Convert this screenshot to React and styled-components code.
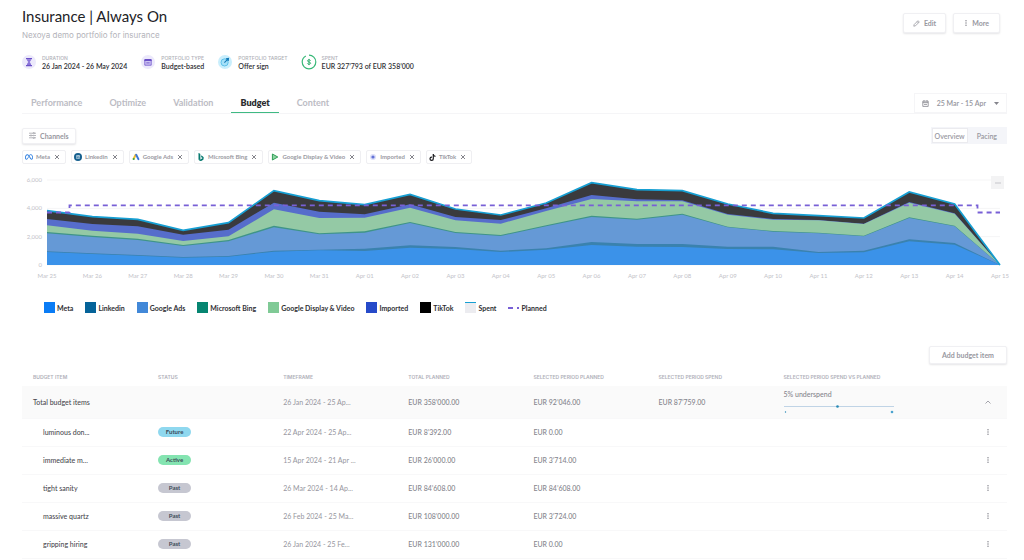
import { useState } from "react";
import styled, { createGlobalStyle, css } from "styled-components";
import { BsBing } from "react-icons/bs";
import { FaMeta, FaLinkedin, FaTiktok } from "react-icons/fa6";

const GlobalStyle = createGlobalStyle`
  *, *::before, *::after {
    box-sizing: border-box;
  }
  body {
    margin: 0;
    background-color: #fff;
    color: #2a2a2e;
    font-family: Lato, "Liberation Sans", sans-serif;
    font-size: 7px;
    line-height: 8px;
  }
  button {
    font-family: inherit;
    cursor: pointer;
  }
`;

const FACTS = [
  { label: "Duration", value: "26 Jan 2024 - 26 May 2024", icon: "duration" },
  { label: "Portfolio type", value: "Budget-based", icon: "type" },
  { label: "Portfolio target", value: "Offer sign", icon: "target" },
  { label: "Spent", value: "EUR 327’793 of EUR 358’000", icon: "spent" },
];

const TABS = ["Performance", "Optimize", "Validation", "Budget", "Content"];

const CHANNELS = [
  { name: "Meta", color: "#0a7cf5", area: "#3b92e9" },
  { name: "Linkedin", color: "#056399", area: "#3a82ae" },
  { name: "Google Ads", color: "#4288d8", area: "#6599d6" },
  { name: "Microsoft Bing", color: "#068571", area: "#3f9488" },
  { name: "Google Display & Video", color: "#80ca96", area: "#94c9a5" },
  { name: "Imported", color: "#264ac9", area: "#566dcb" },
  { name: "TikTok", color: "#000000", area: "#3a3a3d" },
];

// cumulative spend per day, one level per channel (85 = EUR 2,000)
const DAYS = [
  ["Mar 25", [39, 41, 95, 99, 119, 138, 163]],
  ["Mar 26", [33, 35, 84, 88, 103, 123, 145]],
  ["Mar 27", [28, 30, 75, 79, 94, 116, 137]],
  ["Mar 28", [22, 24, 57, 60, 72, 91, 104]],
  ["Mar 29", [25, 27, 71, 75, 86, 106, 127]],
  ["Mar 30", [40, 43, 113, 118, 167, 187, 223]],
  ["Mar 31", [44, 46, 92, 95, 141, 160, 193]],
  ["Apr 01", [42, 49, 97, 101, 142, 152, 181]],
  ["Apr 02", [52, 59, 126, 129, 172, 182, 212]],
  ["Apr 03", [48, 54, 96, 99, 134, 144, 168]],
  ["Apr 04", [39, 43, 87, 90, 124, 135, 150]],
  ["Apr 05", [46, 50, 116, 119, 162, 170, 186]],
  ["Apr 06", [60, 69, 144, 148, 198, 210, 247]],
  ["Apr 07", [55, 63, 136, 139, 191, 197, 226]],
  ["Apr 08", [54, 63, 151, 154, 191, 194, 223]],
  ["Apr 09", [48, 55, 113, 115, 151, 153, 183]],
  ["Apr 10", [47, 55, 100, 102, 136, 138, 155]],
  ["Apr 11", [36, 39, 95, 97, 134, 135, 148]],
  ["Apr 12", [38, 43, 86, 88, 123, 124, 141]],
  ["Apr 13", [71, 77, 141, 143, 187, 189, 219]],
  ["Apr 14", [61, 66, 116, 118, 154, 155, 183]],
  ["Apr 15", [0, 0, 0, 0, 0, 0, 0]],
];

const COLUMNS = [
  "Budget item",
  "Status",
  "Timeframe",
  "Total planned",
  "Selected period planned",
  "Selected period spend",
  "Selected period spend vs planned",
];

const ITEMS = [
  { name: "luminous don...", status: "Future", time: "22 Apr 2024 - 25 Ap...", total: "8’392.00", period: "0.00" },
  { name: "immediate m...", status: "Active", time: "15 Apr 2024 - 21 Apr ...", total: "26’000.00", period: "3’714.00" },
  { name: "tight sanity", status: "Past", time: "26 Mar 2024 - 14 Ap...", total: "84’608.00", period: "84’608.00" },
  { name: "massive quartz", status: "Past", time: "26 Feb 2024 - 25 Ma...", total: "108’000.00", period: "3’724.00" },
  { name: "gripping hiring", status: "Past", time: "26 Jan 2024 - 25 Fe...", total: "131’000.00", period: "0.00" },
];

const STATUS_COLORS = {
  Future: "#8fd8ef",
  Active: "#84e4b1",
  Past: "#c6c7d1",
};

const Page = styled.main`
  padding: 6px 17px 0 22px;
`;

const Header = styled.header`
  display: flex;
  justify-content: space-between;
  align-items: flex-start;
`;

const Title = styled.h1`
  margin: 0;
  font-size: 15px;
  line-height: 20px;
  font-weight: 400;
  color: #222226;
`;

const Subtitle = styled.p`
  margin: 3px 0 0;
  font-family: Inter, sans-serif;
  font-size: 8px;
  line-height: 12px;
  color: #b3b3ba;
`;

const HeaderActions = styled.div`
  display: flex;
  gap: 7px;
  padding: 7px 7px 0 0;
`;

const Button = styled.button`
  display: inline-flex;
  align-items: center;
  justify-content: center;
  gap: 4px;
  height: ${(props) => props.$height || 20}px;
  padding: 0 ${(props) => props.$pad || 10}px;
  border: 1px solid #f0f0f3;
  border-radius: 2px;
  background-color: #fff;
  box-shadow: 0 1px 2px rgba(40, 40, 60, 0.12);
  color: #98989f;
  font-size: 7px;
  line-height: 10px;
  font-weight: 700;
`;

const Facts = styled.dl`
  display: flex;
  gap: 14px;
  margin: 13px 0 0;
`;

const Fact = styled.div`
  display: grid;
  grid-template-columns: 14px auto;
  column-gap: 6px;
  align-items: center;

  svg {
    grid-row: 1 / 3;
  }
  dt {
    font-family: Inter, sans-serif;
    font-size: 5px;
    font-weight: 500;
    color: #b0b0b8;
    text-transform: uppercase;
  }
  dd {
    margin: 0;
    font-weight: 600;
    color: #2f2f34;
  }
`;

const TabBar = styled.div`
  display: flex;
  justify-content: space-between;
  margin-top: 23px;
  border-bottom: 1px solid #f5f5f7;
`;

const Tabs = styled.nav`
  display: flex;
  gap: 9px;
`;

const Tab = styled.button`
  height: 20px;
  padding: 0 9px;
  border: 0;
  border-bottom: 1px solid transparent;
  background: none;
  color: #bcbcc4;
  font-size: 9px;
  line-height: 12px;
  font-weight: 700;

  ${(props) =>
    props.$active &&
    css`
      color: #2b2b30;
      font-weight: 800;
      border-bottom-color: #3fba83;
    `}
`;

const DateButton = styled.button`
  display: flex;
  align-items: center;
  gap: 8px;
  height: 20px;
  padding: 0 7px;
  border: 1px solid #f5f5f7;
  background-color: #fff;
  color: #95959d;
  font-size: 7px;
  line-height: 10px;
  font-weight: 600;
`;

const Toolbar = styled.div`
  display: flex;
  justify-content: space-between;
  align-items: center;
  margin-top: 13px;
`;

const Segmented = styled.div`
  display: flex;
  padding: 1px;
  background-color: #f4f5f9;
`;

const Segment = styled.button`
  height: 15px;
  padding: 0 ${(props) => (props.$active ? 2 : 8)}px;
  border: 1px solid ${(props) => (props.$active ? "#ebebef" : "transparent")};
  background-color: ${(props) => (props.$active ? "#fff" : "transparent")};
  color: #98989f;
  font-size: 7px;
  line-height: 10px;
  font-weight: 600;
`;

const Chips = styled.ul`
  display: flex;
  flex-wrap: wrap;
  gap: 5px;
  margin: 6px 0 0;
  padding: 0;
  list-style: none;
`;

const Chip = styled.li`
  display: flex;
  align-items: center;
  gap: 3px;
  height: 14px;
  padding: 0 4px 0 2px;
  border: 1px solid #efeff2;
  border-radius: 2px;
  color: #9a9aa2;
  font-size: 6px;
  font-weight: 700;
`;

const IconButton = styled.button`
  display: inline-flex;
  align-items: center;
  justify-content: center;
  width: ${(props) => props.$size || 8}px;
  height: ${(props) => props.$size || 8}px;
  padding: 0;
  border: 0;
  background-color: ${(props) => props.$bg || "transparent"};
  color: #77777f;
`;

const ChartWrap = styled.section`
  position: relative;
  margin-top: 4px;

  svg {
    display: block;
  }
  text {
    fill: #c2c2c8;
    font-size: 6px;
  }
`;

const Plot = styled.svg`
  width: 100%;
  overflow: visible;
`;

const ChartMenu = styled.div`
  position: absolute;
  top: 8px;
  right: 3px;
`;

const Legend = styled.ul`
  display: flex;
  flex-wrap: wrap;
  gap: 12px;
  margin: 18px 0 0;
  padding: 0 0 0 22px;
  list-style: none;
`;

const LegendItem = styled.li`
  display: flex;
  align-items: center;
  gap: 2px;
  height: 11px;
  font-weight: 700;
  color: #2f2f34;
`;

const Swatch = styled.span`
  width: 11px;
  height: 11px;
  background-color: ${(props) => props.$color};
  border-top: ${(props) => (props.$line ? `1px solid ${props.$line}` : "0")};
`;

const TableActions = styled.div`
  display: flex;
  justify-content: flex-end;
  margin-top: 33px;
`;

const Table = styled.table`
  width: 100%;
  table-layout: fixed;
  border-collapse: collapse;
  color: #85858d;

  th,
  td {
    padding: 0 0 0 11px;
    text-align: left;
    white-space: nowrap;
    font-weight: 500;
  }
  thead th {
    width: 12.7%;
    height: 22px;
    padding-top: 4px;
    font-family: Inter, sans-serif;
    font-size: 5px;
    font-weight: 600;
    color: #b0b0b9;
    text-transform: uppercase;
  }
  thead th:last-child {
    width: auto;
  }
`;

const Row = styled.tr`
  height: ${(props) => (props.$total ? 32 : 28)}px;
  background-color: ${(props) => (props.$total ? "#fafafa" : "transparent")};
  border-bottom: 1px solid #f8f8f9;

  && th {
    padding-left: ${(props) => (props.$total ? 11 : 21)}px;
    color: #4a4a50;
  }
  td:nth-child(3) {
    color: #96969e;
    font-weight: 400;
  }
  && td:last-child {
    text-align: right;
    padding-right: 15px;
  }
`;

const Status = styled.span`
  display: inline-block;
  width: 33px;
  height: 10px;
  border-radius: 5px;
  background-color: ${(props) => STATUS_COLORS[props.$status]};
  color: #3c4a58;
  font-size: 6px;
  line-height: 10px;
  font-weight: 700;
  text-align: center;
  vertical-align: middle;
`;

const Underspend = styled.div`
  display: flex;
  flex-direction: column;
  gap: 7px;
  width: 110px;

  svg {
    display: block;
  }
`;

const FactIcon = ({ type }) => {
  if (type === "duration") {
    return (
      <svg width="14" height="14" viewBox="0 0 14 14">
        <circle cx="7" cy="7" r="7" fill="#ece9fb" />
        <path d="M4 3h6v1.2H4zM4 10h6v1.2H4z" fill="#6a50c7" />
        <path d="M4.9 4.2h4.2c0 1.5-1 2.1-1.5 2.8.5.7 1.5 1.5 1.5 3H4.9c0-1.5 1-2.3 1.5-3-.5-.7-1.5-1.3-1.5-2.8z" fill="#8a73d8" />
      </svg>
    );
  }
  if (type === "type") {
    return (
      <svg width="14" height="14" viewBox="0 0 14 14">
        <circle cx="7" cy="7" r="7" fill="#ece9fb" />
        <path d="M3.6 4h6.8l.6 2H3z" fill="#6a50c7" />
        <path d="M3.8 6v4.2h6.4V6" fill="#cfc5f3" stroke="#7a62d0" strokeWidth="0.9" />
        <path d="M5.3 7.9h3.4" stroke="#6a50c7" strokeWidth="0.9" />
      </svg>
    );
  }
  if (type === "target") {
    return (
      <svg width="14" height="14" viewBox="0 0 14 14">
        <circle cx="7" cy="7" r="7" fill="#c9eefc" />
        <circle cx="6.6" cy="7.4" r="3.6" fill="#a5e0f8" stroke="#55bce8" strokeWidth="0.9" />
        <path d="M6.4 7.6l3.4-3.4M8 3.8l2.5-.4-.3 2.6" fill="none" stroke="#1479b8" strokeWidth="1.1" />
      </svg>
    );
  }
  return (
    <svg width="14" height="14" viewBox="0 0 14 14" overflow="visible">
      <circle cx="7" cy="7" r="6.8" fill="none" stroke="#38b878" strokeWidth="1.2" strokeDasharray="39.2 3.5" transform="rotate(-90 7 7)" />
      <path d="M8.6 5.6c-.3-.6-.9-.8-1.6-.8-.9 0-1.5.4-1.5 1 0 1.6 3.1.8 3.1 2.4 0 .7-.7 1.1-1.6 1.1-.8 0-1.4-.3-1.7-.9M7 3.9v6.2" fill="none" stroke="#2fae6e" strokeWidth="1" />
    </svg>
  );
};

const ChannelIcon = ({ name }) => {
  switch (name) {
    case "Meta":
      return <FaMeta size={8} color="#2b7de0" />;
    case "Linkedin":
      return (
        <svg width="8" height="8" viewBox="0 0 8 8">
          <circle cx="4" cy="4" r="4" fill="#16608f" />
          <FaLinkedin x="2" y="2" size={4} color="#dbe9f2" />
        </svg>
      );
    case "Google Ads":
      return (
        <svg width="8" height="8" viewBox="0 0 8 8">
          <path d="M3.7 1.8L1.6 5.9" stroke="#f2bd2c" strokeWidth="2" strokeLinecap="round" />
          <path d="M4.2 1.8l2.2 4.3" stroke="#3c78d8" strokeWidth="2" strokeLinecap="round" />
          <circle cx="1.7" cy="6.1" r="1" fill="#34a853" />
        </svg>
      );
    case "Microsoft Bing":
      return <BsBing size={8} color="#087a70" />;
    case "Google Display & Video":
      return (
        <svg width="8" height="8" viewBox="0 0 8 8">
          <path d="M1.4 1l5.4 3-5.4 3z" fill="#8fd3a2" stroke="#2f9f58" strokeWidth="1" strokeLinejoin="round" />
        </svg>
      );
    case "Imported":
      return (
        <svg width="8" height="8" viewBox="0 0 8 8">
          <circle cx="4" cy="4" r="3" fill="#dcdff8" />
          <circle cx="4" cy="4" r="1.6" fill="#6473d6" />
        </svg>
      );
    default:
      return <FaTiktok size={7} color="#1c1c20" />;
  }
};

const DotsIcon = () => (
  <svg width="4" height="8" viewBox="0 0 4 8" fill="#7d7d85">
    <circle cx="2" cy="1.7" r="0.7" />
    <circle cx="2" cy="4" r="0.7" />
    <circle cx="2" cy="6.3" r="0.7" />
  </svg>
);

const CloseIcon = () => (
  <svg width="6" height="6" viewBox="0 0 6 6" stroke="#77777f" strokeWidth="0.9">
    <path d="M1 1l4 4M5 1L1 5" />
  </svg>
);

const LEFT = 25;
const BASE = 97;
const STEP = 953 / 21;

const pointAt = (day, level) => `${LEFT + day * STEP},${BASE - level / 3}`;

const SpendChart = () => {
  const lineFor = (channel) => DAYS.map(([, levels], day) => pointAt(day, levels[channel]));

  return (
    <Plot viewBox="0 0 985 116" role="img" aria-label="Spend per channel">
      {[0, 2, 4, 6].map((tick) => {
        const y = BASE - (tick * 85) / 6;
        return (
          <g key={tick}>
            <line x1={LEFT} x2="978" y1={y} y2={y} stroke="#f5f5f6" />
            <text x="20" y={y + 2} textAnchor="end">
              {tick ? `${tick},000` : "0"}
            </text>
          </g>
        );
      })}
      {/* tallest stack first, so each lower channel covers it */}
      {CHANNELS.map((channel, index) => (
        <polygon
          key={channel.name}
          fill={channel.area}
          points={[...lineFor(index), pointAt(21, 0), pointAt(0, 0)].join(" ")}
        />
      )).reverse()}
      <polyline points={lineFor(6).join(" ")} fill="none" stroke="#169fd3" strokeWidth="1.7" />
      <path
        d="M25 44.5h22.5V37.3H955.5V44.5H978"
        fill="none"
        stroke="#7860d6"
        strokeWidth="1.8"
        strokeDasharray="5 4"
      />
      {DAYS.map(([label], day) => (
        <text key={label} x={LEFT + day * STEP} y="110" textAnchor="middle">
          {label}
        </text>
      ))}
    </Plot>
  );
};

const App = () => {
  const [activeTab, setActiveTab] = useState("Budget");
  const [view, setView] = useState("Overview");

  return (
    <>
      <GlobalStyle />
      <Page>
        <Header>
          <div>
            <Title>Insurance | Always On</Title>
            <Subtitle>Nexoya demo portfolio for insurance</Subtitle>
          </div>
          <HeaderActions>
            <Button $pad={9}>
              <svg width="7" height="7" viewBox="0 0 7 7" fill="none" stroke="#98989f" strokeWidth="0.8">
                <path d="M.8 6.2l.4-1.7L5 .7l1.3 1.3-3.8 3.8zM4.1 1.6l1.3 1.3" />
              </svg>
              Edit
            </Button>
            <Button>
              <DotsIcon />
              More
            </Button>
          </HeaderActions>
        </Header>

        <Facts>
          {FACTS.map((fact) => (
            <Fact key={fact.label}>
              <FactIcon type={fact.icon} />
              <dt>{fact.label}</dt>
              <dd>{fact.value}</dd>
            </Fact>
          ))}
        </Facts>

        <TabBar>
          <Tabs>
            {TABS.map((tab) => (
              <Tab key={tab} $active={tab === activeTab} onClick={() => setActiveTab(tab)}>
                {tab}
              </Tab>
            ))}
          </Tabs>
          <DateButton>
            <svg width="7" height="7" viewBox="0 0 7 7" fill="none" stroke="#85858d" strokeWidth="0.8">
              <path d="M.8 1.2h5.4v5.2H.8zM.8 2.6h5.4M2 0v1.4M5 0v1.4M2 4.4h3" />
            </svg>
            25 Mar - 15 Apr
            <svg width="5" height="3" viewBox="0 0 5 3" fill="#85858d">
              <path d="M0 0h5L2.5 3z" />
            </svg>
          </DateButton>
        </TabBar>

        <Toolbar>
          <Button $height={16} $pad={6}>
            <svg width="7" height="7" viewBox="0 0 7 7" stroke="#98989f" strokeWidth="0.7" fill="#fff">
              <path d="M0 1.2h7M0 3.5h7M0 5.8h7" />
              <circle cx="4.8" cy="1.2" r="0.7" />
              <circle cx="2" cy="3.5" r="0.7" />
              <circle cx="4.8" cy="5.8" r="0.7" />
            </svg>
            Channels
          </Button>
          <Segmented>
            {["Overview", "Pacing"].map((name) => (
              <Segment key={name} $active={name === view} onClick={() => setView(name)}>
                {name}
              </Segment>
            ))}
          </Segmented>
        </Toolbar>

        <Chips>
          {CHANNELS.map(({ name }) => (
            <Chip key={name}>
              <ChannelIcon name={name} />
              <span>{name}</span>
              <IconButton aria-label={`Remove ${name}`}>
                <CloseIcon />
              </IconButton>
            </Chip>
          ))}
        </Chips>

        <ChartWrap>
          <SpendChart />
          <ChartMenu>
            <IconButton $size={13} $bg="#f3f3f4" aria-label="Chart menu">
              <svg width="6" height="2" viewBox="0 0 6 2" fill="#b5b5ba">
                <circle cx="1" cy="1" r="0.7" />
                <circle cx="3" cy="1" r="0.7" />
                <circle cx="5" cy="1" r="0.7" />
              </svg>
            </IconButton>
          </ChartMenu>
        </ChartWrap>

        <Legend>
          {CHANNELS.map(({ name, color }) => (
            <LegendItem key={name}>
              <Swatch $color={color} />
              {name}
            </LegendItem>
          ))}
          <LegendItem>
            <Swatch $color="#ececf0" $line="#169fd3" />
            Spent
          </LegendItem>
          <LegendItem>
            <svg width="11" height="2" viewBox="0 0 11 2" fill="#7860d6">
              <path d="M0 0h5v2H0zM9 0h2v2H9z" />
            </svg>
            Planned
          </LegendItem>
        </Legend>

        <TableActions>
          <Button $height={18} $pad={12}>
            Add budget item
          </Button>
        </TableActions>

        <Table>
          <thead>
            <tr>
              {COLUMNS.map((column) => (
                <th key={column} scope="col">
                  {column}
                </th>
              ))}
              <th aria-label="Actions" />
            </tr>
          </thead>
          <tbody>
            <Row $total>
              <th scope="row">Total budget items</th>
              <td />
              <td>26 Jan 2024 - 25 Ap...</td>
              <td>EUR 358’000.00</td>
              <td>EUR 92’046.00</td>
              <td>EUR 87’759.00</td>
              <td>
                <Underspend>
                  5% underspend
                  <svg width="110" height="9" viewBox="0 0 110 9">
                    <path d="M0 1.5h110" stroke="#c0d4e6" />
                    <circle cx="53.5" cy="1.5" r="1.3" fill="#2588b4" />
                    <circle cx="1.5" cy="7" r="0.7" fill="#2588b4" />
                    <circle cx="108" cy="7" r="1.3" fill="#4ba3cf" />
                  </svg>
                </Underspend>
              </td>
              <td>
                <IconButton aria-label="Collapse">
                  <svg width="6" height="4" viewBox="0 0 6 4" fill="none" stroke="#9a9aa2" strokeWidth="0.9">
                    <path d="M.5 3.5L3 1l2.5 2.5" />
                  </svg>
                </IconButton>
              </td>
            </Row>
            {ITEMS.map((item) => (
              <Row key={item.name}>
                <th scope="row">{item.name}</th>
                <td>
                  <Status $status={item.status}>{item.status}</Status>
                </td>
                <td>{item.time}</td>
                <td>EUR {item.total}</td>
                <td>EUR {item.period}</td>
                <td />
                <td />
                <td>
                  <IconButton aria-label={`Actions for ${item.name}`}>
                    <DotsIcon />
                  </IconButton>
                </td>
              </Row>
            ))}
          </tbody>
        </Table>
      </Page>
    </>
  );
};

export default App;
